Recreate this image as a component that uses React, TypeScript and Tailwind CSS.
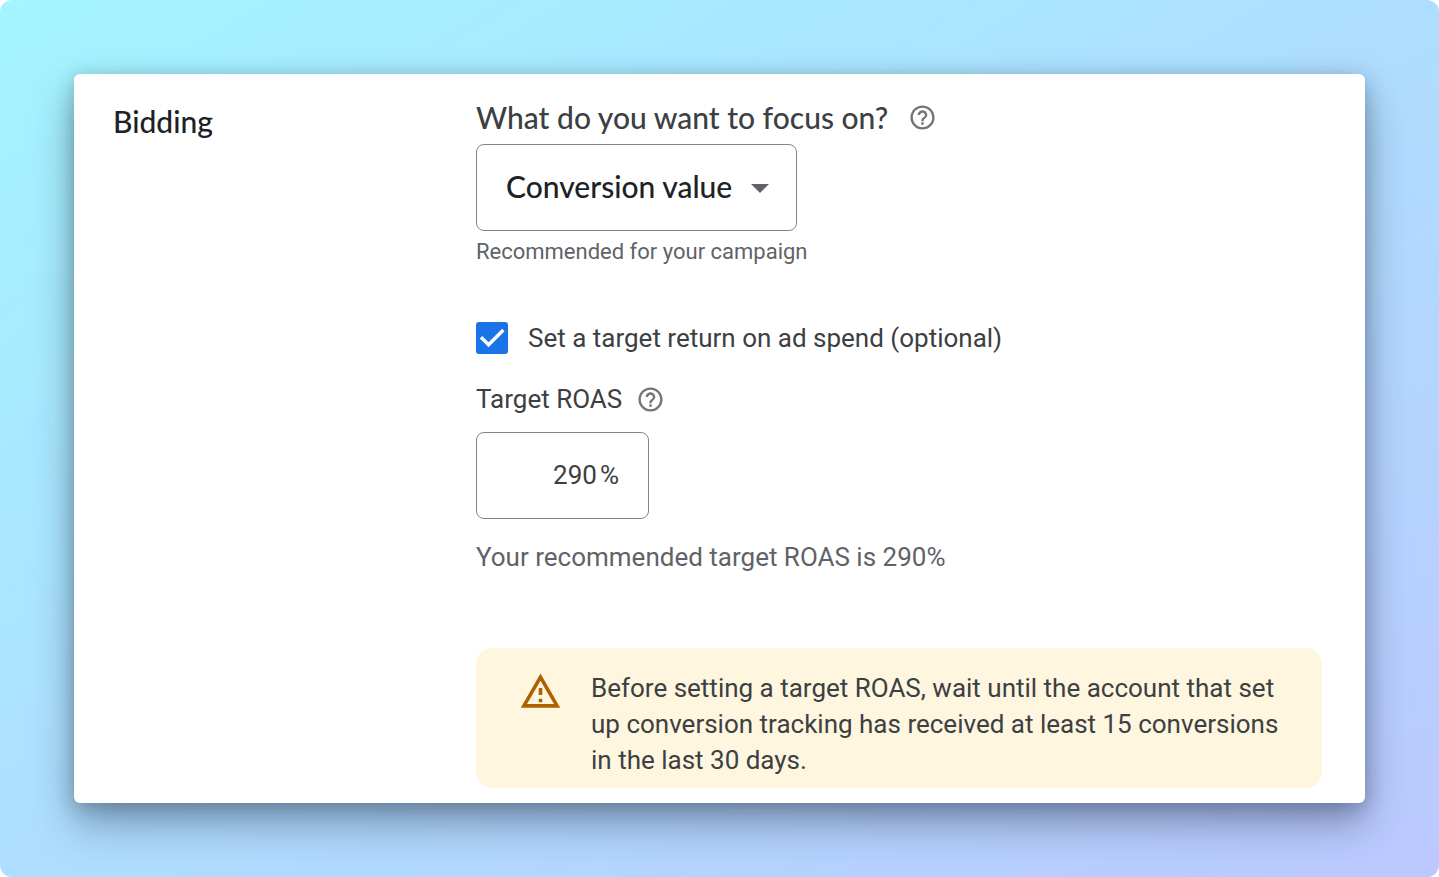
import { useId, useState } from "react";

function HelpButton({ label }: { label: string }) {
  return (
    <button type="button" aria-label={label} className="shrink-0 text-[#757575]">
      <svg viewBox="0 0 24 24" className="block size-[29px]" fill="currentColor" aria-hidden="true">
        <path d="M11 18h2v-2h-2v2zm1-16C6.48 2 2 6.48 2 12s4.48 10 10 10 10-4.48 10-10S17.52 2 12 2zm0 18c-4.41 0-8-3.59-8-8s3.59-8 8-8 8 3.59 8 8-3.59 8-8 8zm0-14c-2.21 0-4 1.79-4 4h2c0-1.1.9-2 2-2s2 .9 2 2c0 2-3 1.75-3 5h2c0-2.25 3-2.5 3-5 0-2.21-1.79-4-4-4z" />
      </svg>
    </button>
  );
}

function FocusField() {
  const id = useId();
  return (
    <div>
      <div className="flex h-9 items-center gap-5">
        <label htmlFor={id} className="font-[Lato,sans-serif] text-[30px] leading-9 font-medium text-[#3c4043]">
          What do you want to focus on?
        </label>
        <HelpButton label="Help with bidding focus" />
      </div>
      <div className="relative mt-[9px] w-[321px] max-w-full">
        <select
          id={id}
          className="block h-[87px] w-full appearance-none rounded-lg border border-[#80868b] bg-white pr-12 pb-0.5 pl-[29px] font-[Lato,sans-serif] text-[30px] font-medium text-[#202124]"
        >
          <option>Conversion value</option>
          <option>Conversions</option>
        </select>
        <svg viewBox="0 0 18 9" className="pointer-events-none absolute top-10 right-7 h-[9px] w-[18px]" fill="#5f6368" aria-hidden="true">
          <path d="M0 0h18L9 9z" />
        </svg>
      </div>
      <p className="mt-[5px] text-[22px] leading-8 text-[#5f6368]">Recommended for your campaign</p>
    </div>
  );
}

function TargetCheckbox() {
  const [checked, setChecked] = useState(true);
  return (
    <label className="mt-[54px] flex items-center gap-5 text-[26px] leading-8 text-[#3c4043]">
      <span className="relative block size-8 shrink-0">
        <input
          type="checkbox"
          checked={checked}
          onChange={(e) => setChecked(e.target.checked)}
          className="block size-8 appearance-none rounded-[3px] border-2 border-[#5f6368] checked:border-[#1a73e8] checked:bg-[#1a73e8]"
        />
        {checked && (
          <svg viewBox="0 0 32 32" className="pointer-events-none absolute inset-0 size-8" fill="none" stroke="#fff" strokeWidth="3.4" aria-hidden="true">
            <path d="M5 15.2l7.6 7.6L27.4 8" />
          </svg>
        )}
      </span>
      Set a target return on ad spend (optional)
    </label>
  );
}

function RoasField() {
  const id = useId();
  return (
    <div className="mt-[27px]">
      <div className="flex h-9 items-center gap-[14px]">
        <label htmlFor={id} className="text-[26px] leading-9 text-[#3c4043]">
          Target ROAS
        </label>
        <HelpButton label="Help with target ROAS" />
      </div>
      <div className="mt-[15px] flex h-[87px] w-[173px] items-center gap-[3px] rounded-lg border border-[#80868b] pr-[29px] pl-5 text-[26px] text-[#3c4043]">
        <input id={id} type="text" inputMode="numeric" defaultValue="290" className="w-full min-w-0 flex-1 text-right outline-none" />
        <span>%</span>
      </div>
      <p className="mt-5 text-[26px] leading-9 text-[#5f6368]">Your recommended target ROAS is 290%</p>
    </div>
  );
}

function Notice() {
  return (
    <div role="note" className="mt-[73px] flex items-start rounded-2xl bg-[#fef6df] pt-[22px] pr-9 pb-[10px] pl-[43px]">
      <svg viewBox="0 0 24 24" className="mr-[29px] block size-[43px] shrink-0" fill="#b06000" aria-hidden="true">
        <path d="M12 5.99L19.53 19H4.47L12 5.99M12 2L1 21h22L12 2zm1 14h-2v2h2v-2zm0-6h-2v4h2v-4z" />
      </svg>
      <p className="text-[26px] leading-9 text-[#3c4043]">
        Before setting a target ROAS, wait until the account that set up conversion tracking has received at least 15 conversions in the last 30 days.
      </p>
    </div>
  );
}

export default function App() {
  return (
    <div className="min-h-screen bg-white font-[Roboto,sans-serif]">
      <main className="min-h-screen rounded-xl bg-[linear-gradient(to_bottom_right,#a3f5ff_0%,#aedeff_50%,#bbc8ff_100%)] p-[74px]">
        <section className="flex rounded-md bg-white pt-[25px] pr-[43px] pb-[15px] pl-[39px] shadow-[0_20px_40px_rgba(30,40,60,0.4),0_4px_18px_rgba(30,40,60,0.25)]">
          <h1 className="mt-1 w-[363px] shrink-0 font-[Lato,sans-serif] text-[30px] leading-9 font-medium text-[#202124]">Bidding</h1>
          <div className="min-w-0 flex-1">
            <FocusField />
            <TargetCheckbox />
            <RoasField />
            <Notice />
          </div>
        </section>
      </main>
    </div>
  );
}
